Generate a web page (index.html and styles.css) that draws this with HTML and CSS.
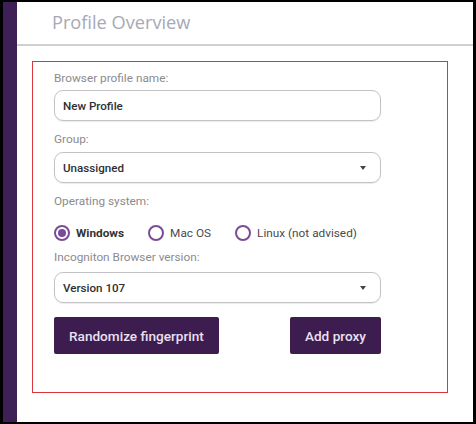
FILE: index.html
```html
<!DOCTYPE html>
<html lang="en">

<head>
    <meta charset="UTF-8">
    <meta name="viewport" content="width=device-width, initial-scale=1.0">
    <title>Profile Overview</title>
    <link rel="stylesheet" href="styles.css">
</head>

<body>
    <div class="frame">
        <!-- Sidebar -->
        <div class="sidebar"></div>

        <div class="main">
            <div class="header">
                <h2>Profile Overview</h2>
            </div>

            <div class="content">
                <div class="profile-box">
                    <label class="field-label first">Browser profile name:</label>
                    <div class="field">New Profile</div>

                    <label class="field-label">Group:</label>
                    <div class="field select">
                        <span>Unassigned</span>
                        <span class="caret"></span>
                    </div>

                    <label class="field-label">Operating system:</label>
                    <div class="radio-row">
                        <div class="radio checked">
                            <span class="radio-dot"></span>
                            <span>Windows</span>
                        </div>
                        <div class="radio">
                            <span class="radio-dot"></span>
                            <span>Mac OS</span>
                        </div>
                        <div class="radio">
                            <span class="radio-dot"></span>
                            <span>Linux (not advised)</span>
                        </div>
                    </div>

                    <label class="field-label tight">Incogniton Browser version:</label>
                    <div class="field select">
                        <span>Version 107</span>
                        <span class="caret"></span>
                    </div>

                    <div class="button-row">
                        <button class="btn">Randomize fingerprint</button>
                        <button class="btn">Add proxy</button>
                    </div>
                </div>
            </div>
        </div>
    </div>
</body>

</html>
```

FILE: styles.css
```css
* {
    margin: 0;
    padding: 0;
    box-sizing: border-box;
    font-family: Roboto, "Liberation Sans", sans-serif;
}

body {
    background-color: #000;
    width: 476px;
    height: 424px;
    overflow: hidden;
}

.frame {
    display: flex;
    height: 424px;
    border-style: solid;
    border-color: #000;
    border-width: 2px 3px 2px 3px;
    background-color: #fff;
}

.sidebar {
    width: 14px;
    background-color: #3e1f56;
}

.main {
    flex: 1;
    display: flex;
    flex-direction: column;
}

.header {
    height: 44px;
    border-bottom: 2px solid #cfd0d4;
    padding: 8px 0 0 35px;
}

.header h2 {
    font-family: "Open Sans", sans-serif;
    font-weight: 400;
    font-size: 18.2px;
    color: #a7a9b5;
}

.content {
    padding: 15px 0 0 15px;
}

.profile-box {
    width: 416px;
    height: 332px;
    border: 1px solid #d9373b;
    padding: 9px 0 0 21px;
}

.field-label {
    display: block;
    font-size: 11.8px;
    line-height: 14px;
    color: #8b8b8f;
    margin: 11px 0 6px;
}

.field-label.first {
    margin-top: 0;
    margin-bottom: 5px;
}

.field-label.tight {
    margin-top: 7px;
    margin-bottom: 8px;
}

.field {
    width: 327px;
    height: 31px;
    border: 1px solid #c3c3c6;
    border-radius: 9px;
    box-shadow: 0 1px 1px rgba(0, 0, 0, 0.08);
    display: flex;
    align-items: center;
    justify-content: space-between;
    padding: 0 14px 0 8px;
    font-size: 11.6px;
    font-weight: 500;
    color: #2f2f33;
}

.caret {
    width: 0;
    height: 0;
    border-left: 3.5px solid transparent;
    border-right: 3.5px solid transparent;
    border-top: 4px solid #444;
}

.radio-row {
    display: flex;
    align-items: center;
    gap: 24px;
    height: 20px;
    margin-top: 15px;
}

.radio {
    display: flex;
    align-items: center;
    gap: 6px;
    font-size: 11.8px;
    color: #4a4a4e;
}

.radio.checked {
    font-weight: 700;
    color: #333;
}

.radio-dot {
    width: 16px;
    height: 16px;
    border: 2px solid #7a4b99;
    border-radius: 50%;
    display: flex;
    align-items: center;
    justify-content: center;
}

.radio.checked .radio-dot::after {
    content: "";
    width: 8px;
    height: 8px;
    border-radius: 50%;
    background-color: #7a4b99;
}

.button-row {
    display: flex;
    justify-content: space-between;
    width: 327px;
    margin-top: 14px;
}

.btn {
    height: 37px;
    padding: 0 15px;
    border: none;
    border-radius: 2px;
    background-color: #3d1c50;
    color: #e9e1f0;
    font-size: 13.6px;
    font-weight: 500;
    cursor: pointer;
}
```
